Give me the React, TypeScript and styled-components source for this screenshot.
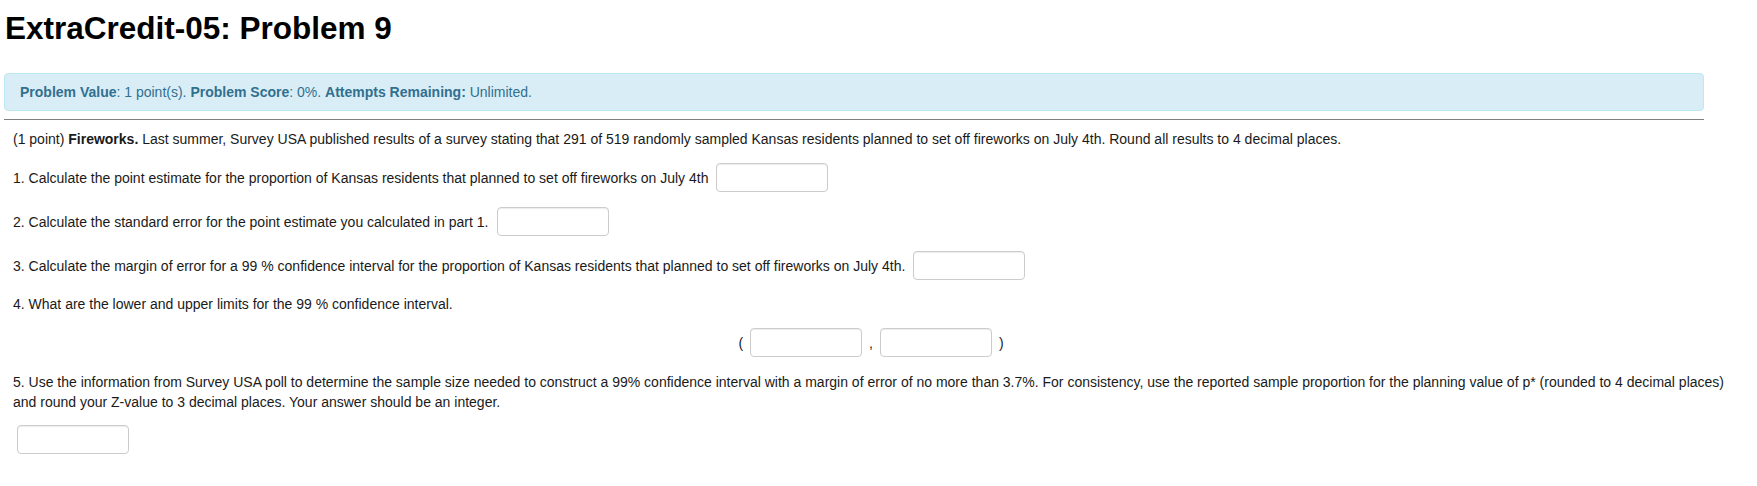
import React from "react";
import styled, { createGlobalStyle } from "styled-components";

const GlobalStyle = createGlobalStyle`
  html, body {
    margin: 0;
    padding: 0;
    background: #ffffff;
  }
  body {
    font-family: "Liberation Sans", Arial, sans-serif;
    color: #1a1a1a;
  }
`;

const Page = styled.div`
  padding: 10px 0 0 4px;
`;

const Header = styled.div`
  width: 1700px;
`;

const Title = styled.h1`
  margin: 0 0 27px 1px;
  font-size: 31.5px;
  line-height: 36px;
  font-weight: bold;
  color: #000;
`;

const Alert = styled.div`
  background: #d9edf7;
  border: 1px solid #bce8f1;
  border-radius: 4px;
  color: #31708f;
  font-size: 14px;
  line-height: 20px;
  padding: 8px 15px;
`;

const Rule = styled.hr`
  margin: 8px 0 0 0;
  border: 0;
  border-top: 1px solid #7f7f7f;
  height: 0;
`;

const Body = styled.div`
  width: 1716px;
  padding: 10px 9px 0 9px;
  font-size: 14px;
  line-height: 20px;
  display: flex;
  flex-direction: column;
`;

const Para = styled.p<{ $top?: number; $lh?: number }>`
  margin: ${(p) => p.$top ?? 0}px 0 0 0;
  line-height: ${(p) => p.$lh ?? 20}px;
`;

const Row = styled.div<{ $center?: boolean; $top?: number; $indent?: number }>`
  display: flex;
  align-items: center;
  justify-content: ${(p) => (p.$center ? "center" : "flex-start")};
  gap: ${(p) => (p.$center ? "7px" : "8px")};
  margin-top: ${(p) => p.$top ?? 15}px;
  padding-left: ${(p) => p.$indent ?? 0}px;
`;

const Answer = styled.input`
  box-sizing: border-box;
  width: 112px;
  height: 29px;
  border: 1px solid #cccccc;
  border-radius: 4px;
  box-shadow: inset 0 1px 1px rgba(0, 0, 0, 0.075);
  background: #fff;
  padding: 4px 6px;
  font: inherit;
  outline: none;
`;

const Mark = styled.span`
  color: #1a1a1a;
`;

export default function App() {
  return (
    <>
      <GlobalStyle />
      <Page>
        <Header>
          <Title>ExtraCredit-05: Problem 9</Title>
          <Alert>
            <b>Problem Value</b>: 1 point(s). <b>Problem Score</b>: 0%.{" "}
            <b>Attempts Remaining:</b> Unlimited.
          </Alert>
          <Rule />
        </Header>
        <Body>
          <Para $lh={18}>
            (1 point) <b>Fireworks.</b> Last summer, Survey USA published results of a survey
            stating that 291 of 519 randomly sampled Kansas residents planned to set off
            fireworks on July 4th. Round all results to 4 decimal places.
          </Para>
          <Row>
            <span>
              1. Calculate the point estimate for the proportion of Kansas residents that
              planned to set off fireworks on July 4th
            </span>
            <Answer />
          </Row>
          <Row>
            <span>2. Calculate the standard error for the point estimate you calculated in part 1.</span>
            <Answer />
          </Row>
          <Row>
            <span>
              3. Calculate the margin of error for a 99 % confidence interval for the proportion
              of Kansas residents that planned to set off fireworks on July 4th.
            </span>
            <Answer />
          </Row>
          <Para $top={14}>4. What are the lower and upper limits for the 99 % confidence interval.</Para>
          <Row $center $top={14}>
            <Mark>(</Mark>
            <Answer />
            <Mark>,</Mark>
            <Answer />
            <Mark>)</Mark>
          </Row>
          <Para $top={15}>
            5. Use the information from Survey USA poll to determine the sample size needed to
            construct a 99% confidence interval with a margin of error of no more than 3.7%. For
            consistency, use the reported sample proportion for the planning value of p* (rounded
            to 4 decimal places) and round your Z-value to 3 decimal places. Your answer should be
            an integer.
          </Para>
          <Row $top={13} $indent={4}>
            <Answer />
          </Row>
        </Body>
      </Page>
    </>
  );
}
